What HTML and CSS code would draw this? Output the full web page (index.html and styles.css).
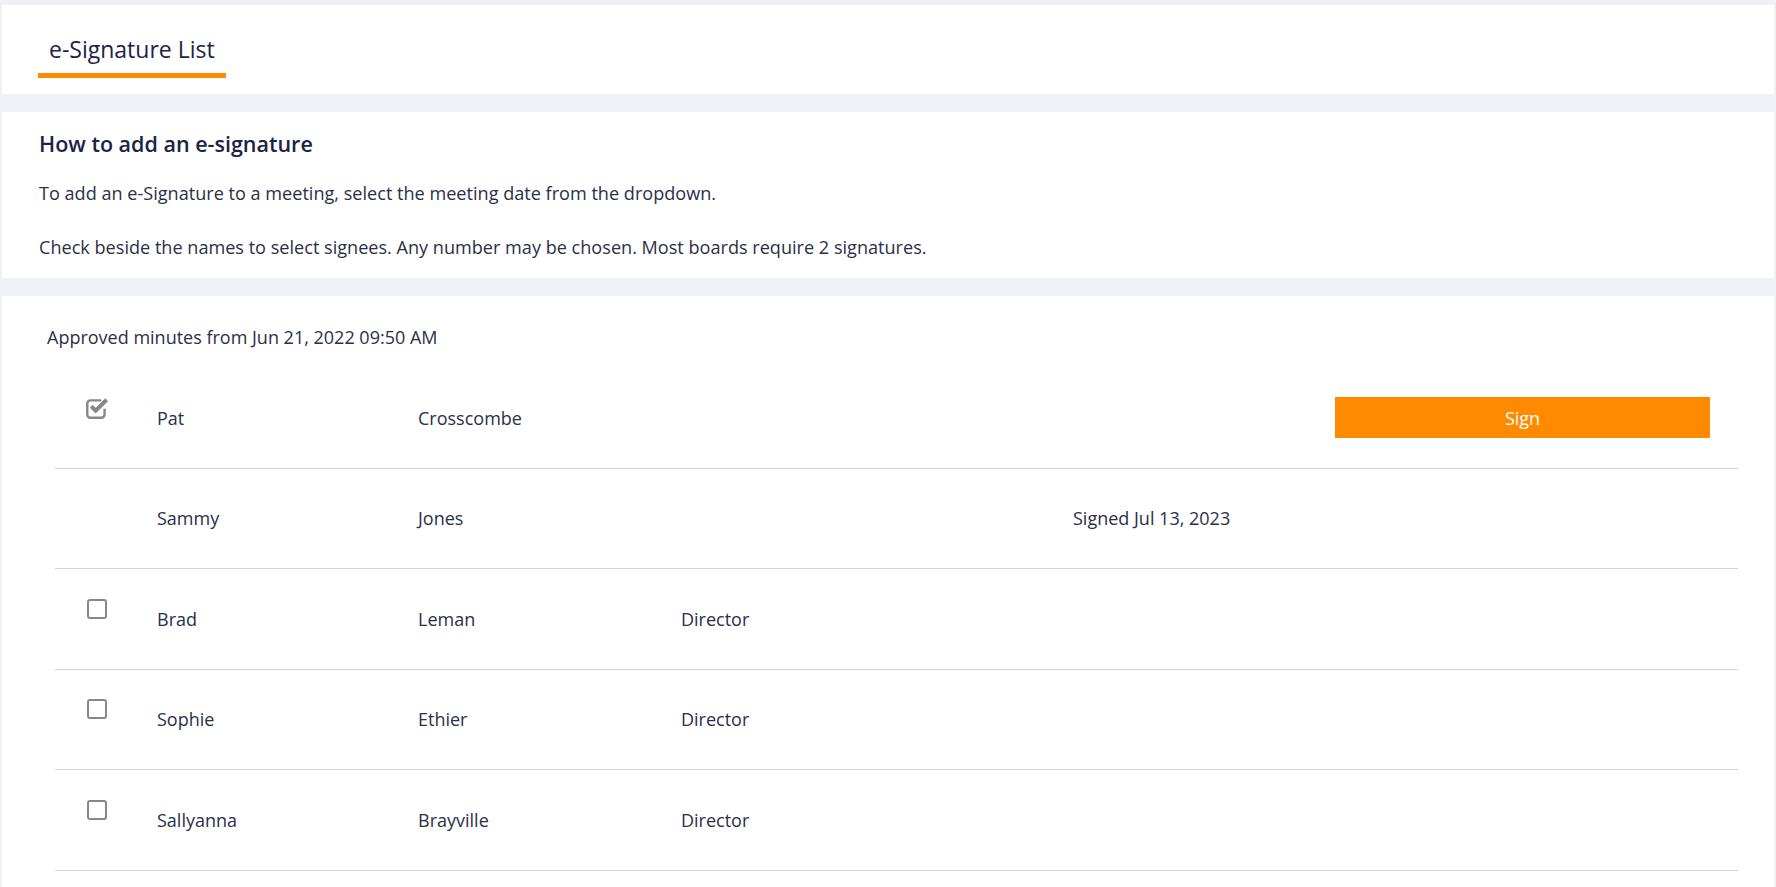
FILE: index.html
```html
<!DOCTYPE html>
<html lang="en">
<head>
<meta charset="utf-8">
<title>e-Signature List</title>
<link rel="stylesheet" href="styles.css">
</head>
<body>
<div class="page">
  <section class="panel tabs">
    <div class="tab active">e-Signature List</div>
  </section>

  <section class="panel help">
    <h2 class="help-title">How to add an e-signature</h2>
    <p class="help-text">To add an e-Signature to a meeting, select the meeting date from the dropdown.</p>
    <p class="help-text">Check beside the names to select signees. Any number may be chosen. Most boards require 2 signatures.</p>
  </section>

  <section class="panel list">
    <div class="caption">Approved minutes from Jun 21, 2022 09:50 AM</div>
    <div class="rows">
      <div class="row">
        <div class="cell check">
          <svg class="cb-checked" width="24" height="22" viewBox="0 0 23 21">
            <path d="M14.5 3.2H4.2a3 3 0 0 0-3 3v10.6a3 3 0 0 0 3 3h10.6a3 3 0 0 0 3-3v-5.5" fill="none" stroke="#888888" stroke-width="2.3"/>
            <path d="M5 8.8l4.3 4.3 10.5-10.5" fill="none" stroke="#888888" stroke-width="3.8" stroke-linejoin="miter"/>
          </svg>
        </div>
        <div class="cell">Pat</div>
        <div class="cell">Crosscombe</div>
        <div class="cell"></div>
        <div class="cell"></div>
        <div class="cell action"><button class="sign-btn">Sign</button></div>
      </div>
      <div class="row">
        <div class="cell check"></div>
        <div class="cell">Sammy</div>
        <div class="cell">Jones</div>
        <div class="cell"></div>
        <div class="cell">Signed Jul 13, 2023</div>
        <div class="cell action"></div>
      </div>
      <div class="row">
        <div class="cell check"><span class="cb"></span></div>
        <div class="cell">Brad</div>
        <div class="cell">Leman</div>
        <div class="cell">Director</div>
        <div class="cell"></div>
        <div class="cell action"></div>
      </div>
      <div class="row">
        <div class="cell check"><span class="cb"></span></div>
        <div class="cell">Sophie</div>
        <div class="cell">Ethier</div>
        <div class="cell">Director</div>
        <div class="cell"></div>
        <div class="cell action"></div>
      </div>
      <div class="row">
        <div class="cell check"><span class="cb"></span></div>
        <div class="cell">Sallyanna</div>
        <div class="cell">Brayville</div>
        <div class="cell">Director</div>
        <div class="cell"></div>
        <div class="cell action"></div>
      </div>
    </div>
  </section>
</div>
</body>
</html>
```

FILE: styles.css
```css
html, body {
  margin: 0;
  padding: 0;
  height: 100%;
  overflow: hidden;
}

body {
  background: #f0f1f6;
  font-family: "Open Sans", "Noto Sans", sans-serif;
  color: #2b2f48;
}

.page {
  height: 100%;
  box-sizing: border-box;
  padding: 5px 2px 0 2px;
  display: flex;
  flex-direction: column;
  gap: 18px;
}

.panel {
  background: #ffffff;
}

/* tabs */
.tabs {
  height: 89px;
  flex: none;
  padding-left: 36px;
  box-sizing: border-box;
  display: flex;
  align-items: flex-start;
}

.tab {
  margin-top: 28px;
  padding: 0 11px 8px 11px;
  font-size: 23px;
  line-height: 32px;
  color: #1c2347;
  border-bottom: 5px solid #ff8a00;
}

/* help */
.help {
  height: 166px;
  flex: none;
  box-sizing: border-box;
  padding: 19px 37px 0 37px;
}

.help-title {
  margin: 0;
  font-size: 21.5px;
  line-height: 26px;
  font-weight: 600;
  color: #1b2346;
}

.help-text {
  margin: 0;
  font-size: 18.1px;
  line-height: 22px;
  color: #2b2f48;
}

.help-title + .help-text {
  margin-top: 25px;
}

.help-text + .help-text {
  margin-top: 32px;
}

/* list */
.list {
  flex: 1;
  min-height: 0;
  padding: 30px 36px 0 53px;
}

.caption {
  margin-left: -8px;
  font-size: 18px;
  line-height: 22px;
  margin-bottom: 20px;
}

.rows {
  display: flex;
  flex-direction: column;
}

.row {
  display: grid;
  grid-template-columns: 102px 261px 263px 392px 262px 1fr;
  align-items: center;
  height: 99.5px;
  border-bottom: 1px solid #d4d4d6;
  font-size: 18px;
  line-height: 22px;
}

.cell.check {
  height: 22px;
  position: relative;
}

.cb {
  position: absolute;
  left: 32px;
  top: -9px;
  width: 16px;
  height: 16px;
  border: 2px solid #888888;
  border-radius: 3px;
}

.cb-checked {
  position: absolute;
  left: 31px;
  top: -10px;
}

.cell.action {
  display: flex;
  justify-content: flex-end;
  padding-right: 28px;
}

.sign-btn {
  width: 375px;
  height: 41px;
  border: none;
  background: #ff8a00;
  color: #ffffff;
  font-family: "Open Sans", "Noto Sans", sans-serif;
  font-size: 18px;
  padding: 0;
  cursor: pointer;
}
```
